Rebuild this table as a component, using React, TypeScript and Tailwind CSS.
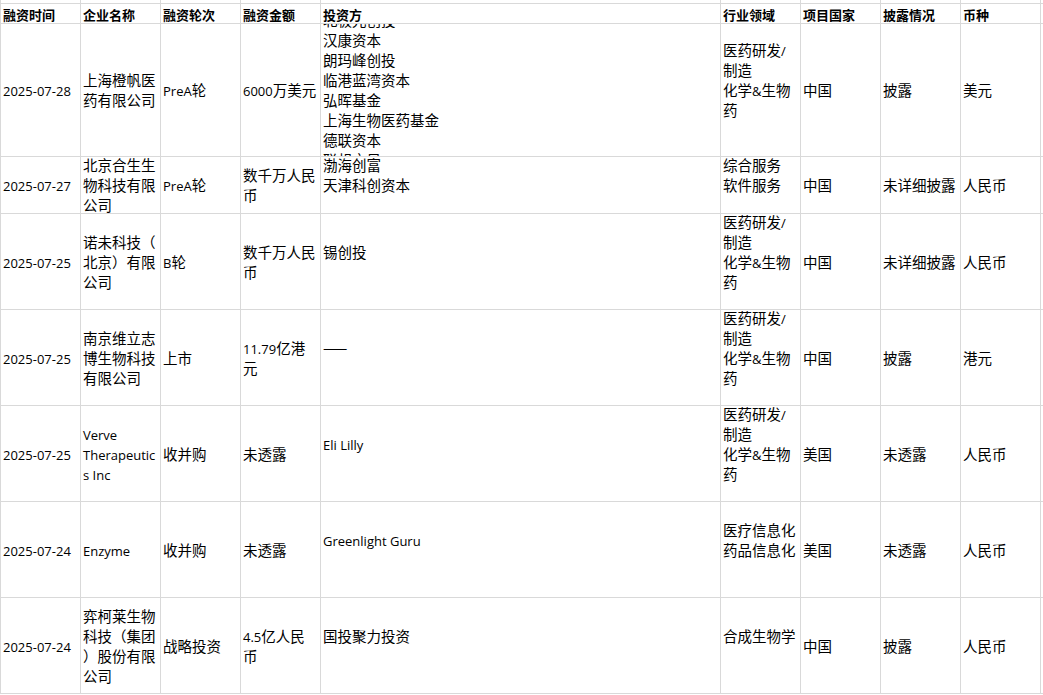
const headers = ["融资时间", "企业名称", "融资轮次", "融资金额", "投资方", "行业领域", "项目国家", "披露情况", "币种"];

const pharma = "医药研发/\n制造\n化学&生物\n药\n";

const rows = [
  {
    h: "h-[133px]",
    cells: [
      "2025-07-28",
      "上海橙帆医\n药有限公司",
      "PreA轮",
      "6000万美元",
      "北极光创投\n汉康资本\n朗玛峰创投\n临港蓝湾资本\n弘晖基金\n上海生物医药基金\n德联资本\n联想之星",
      pharma,
      "中国",
      "披露",
      "美元",
    ],
  },
  {
    h: "h-[57px]",
    cells: [
      "2025-07-27",
      "北京合生生\n物科技有限\n公司",
      "PreA轮",
      "数千万人民\n币",
      "渤海创富\n天津科创资本\n",
      "综合服务\n软件服务\n",
      "中国",
      "未详细披露",
      "人民币",
    ],
  },
  {
    h: "h-[96px]",
    cells: ["2025-07-25", "诺未科技（\n北京）有限\n公司", "B轮", "数千万人民\n币", "锡创投\n", pharma, "中国", "未详细披露", "人民币"],
  },
  {
    h: "h-[96px]",
    cells: ["2025-07-25", "南京维立志\n博生物科技\n有限公司", "上市", "11.79亿港\n元", "——\n", pharma, "中国", "披露", "港元"],
  },
  {
    h: "h-[96px]",
    cells: ["2025-07-25", "Verve\nTherapeutic\ns Inc", "收并购", "未透露", "Eli Lilly\n", pharma, "美国", "未透露", "人民币"],
  },
  {
    h: "h-[96px]",
    cells: ["2025-07-24", "Enzyme", "收并购", "未透露", "Greenlight Guru\n", "医疗信息化\n药品信息化\n", "美国", "未透露", "人民币"],
  },
  {
    h: "h-[96px]",
    cells: ["2025-07-24", "弈柯莱生物\n科技（集团\n）股份有限\n公司", "战略投资", "4.5亿人民\n币", "国投聚力投资\n", "合成生物学\n", "中国", "披露", "人民币"],
  },
];

const cols = "grid grid-cols-[80px_80px_80px_80px_400px_80px_80px_80px_80px_1fr]";

// latin runs are set a bit smaller, like the sheet's narrow western font
function Line({ text }: { text: string }) {
  if (!text) return <>{"\u00a0"}</>;
  if (text === "——") return <span className="tracking-[3px]">{text}</span>;
  return (
    <>
      {text.split(/([\x20-\x7e]+)/).map((part, k) =>
        /^[\x20-\x7e]+$/.test(part) ? (
          <span key={k} className="font-['Open_Sans',sans-serif] text-[13px]">
            {part}
          </span>
        ) : (
          <span key={k}>{part}</span>
        )
      )}
    </>
  );
}

export default function App() {
  return (
    <div className="w-[1043px] h-[695px] overflow-hidden bg-white text-black font-['Noto_Sans_CJK_SC','Noto_Sans',sans-serif]">
      <div className="border-l border-[#d9d9d9]">
        {/* cut-off row above the header */}
        <div className={`${cols} h-[4px]`}>
          {Array.from({ length: 10 }).map((_, i) => (
            <div key={i} className={`border-b border-[#d9d9d9] ${i < 9 ? "border-r" : ""}`} />
          ))}
        </div>

        {/* HEADER */}
        <div className={`${cols} h-[20px]`}>
          {headers.map((t) => (
            <div
              key={t}
              className="flex items-end px-[2px] border-b border-r border-[#d9d9d9] text-[13px] leading-[16px] font-bold whitespace-nowrap overflow-hidden"
            >
              {t}
            </div>
          ))}
          <div className="border-b border-[#d9d9d9]" />
        </div>

        {/* ROWS */}
        {rows.map((row, r) => (
          <div key={r} className={`${cols} ${row.h}`}>
            {row.cells.map((c, i) => (
              <div
                key={i}
                className="flex flex-col justify-center overflow-hidden px-[2px] border-b border-r border-[#d9d9d9] text-[14.5px] whitespace-nowrap"
              >
                {c.split("\n").map((line, j) => (
                  <div key={j} className="h-5 leading-5 shrink-0">
                    <Line text={line} />
                  </div>
                ))}
              </div>
            ))}
            <div className="border-b border-[#d9d9d9]" />
          </div>
        ))}
      </div>
    </div>
  );
}
